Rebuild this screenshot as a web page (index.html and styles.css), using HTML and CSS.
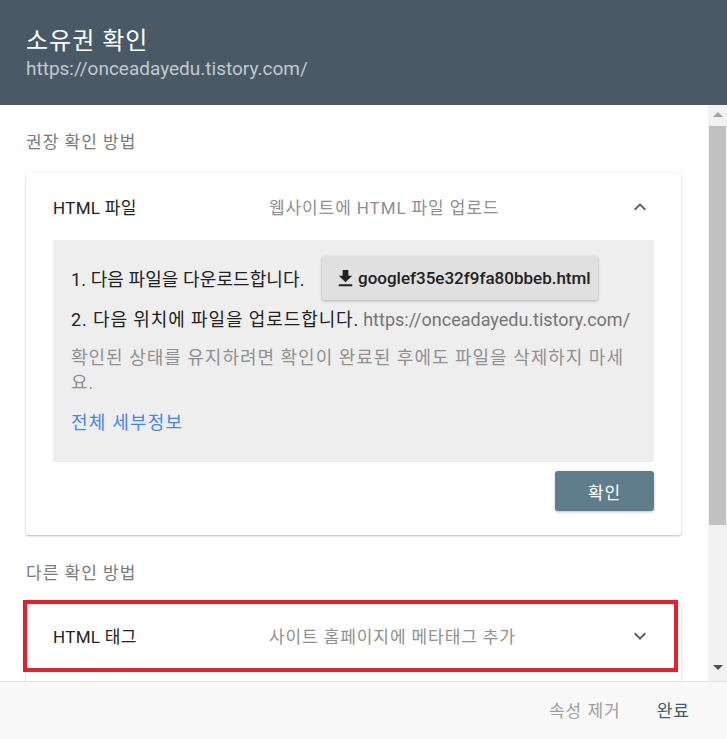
FILE: index.html
```html
<!DOCTYPE html>
<html lang="ko">
<head>
<meta charset="utf-8">
<title>소유권 확인</title>
<link rel="stylesheet" href="styles.css">
</head>
<body>
<div class="dialog">
  <header class="head">
    <h1 class="title">소유권 확인</h1>
    <div class="site">https://onceadayedu.tistory.com/</div>
  </header>
  <div class="body">
    <div class="scroll">
      <div class="label">권장 확인 방법</div>
      <div class="card">
        <div class="card-head">
          <span class="name">HTML 파일</span>
          <span class="desc">웹사이트에 HTML 파일 업로드</span>
          <svg class="chev" viewBox="0 0 24 24" width="24" height="24"><path d="M7.41 15.41L12 10.83l4.59 4.58L18 14l-6-6-6 6z"/></svg>
        </div>
        <div class="panel">
          <div class="step1">
            <span class="step-text">1. 다음 파일을 다운로드합니다.</span>
            <button class="dl"><svg viewBox="0 0 24 24" width="24" height="24"><path d="M19 9h-4V3H9v6H5l7 7 7-7zM5 18v2h14v-2H5z"/></svg><span>googlef35e32f9fa80bbeb.html</span></button>
          </div>
          <div class="step2"><span class="step-text">2. 다음 위치에 파일을 업로드합니다.</span> <span class="u">https://onceadayedu.tistory.com/</span></div>
          <p class="note">확인된 상태를 유지하려면 확인이 완료된 후에도 파일을 삭제하지 마세요.</p>
          <a class="more" href="#">전체 세부정보</a>
        </div>
        <div class="actions"><button class="confirm">확인</button></div>
      </div>
      <div class="label label2">다른 확인 방법</div>
      <div class="card card2">
        <div class="card-head">
          <span class="name">HTML 태그</span>
          <span class="desc">사이트 홈페이지에 메타태그 추가</span>
          <svg class="chev" viewBox="0 0 24 24" width="24" height="24"><path d="M16.59 8.59L12 13.17 7.41 8.59 6 10l6 6 6-6z"/></svg>
        </div>
        <div class="highlight"></div>
      </div>
    </div>
    <div class="scrollbar">
      <div class="arrow up"></div>
      <div class="track"><div class="thumb"></div></div>
      <div class="arrow down"></div>
    </div>
  </div>
  <footer class="foot">
    <span class="btn-remove">속성 제거</span>
    <span class="btn-done">완료</span>
  </footer>
</div>
</body>
</html>
```

FILE: styles.css
```css
* { box-sizing: border-box; }
html, body { margin: 0; padding: 0; }
body {
  font-family: Roboto, "Noto Sans CJK KR", sans-serif;
  background: #fff;
  color: #212121;
}
.dialog {
  width: 727px;
  height: 739px;
  display: flex;
  flex-direction: column;
  overflow: hidden;
}
.head {
  height: 105px;
  flex: none;
  background: #495a66;
  padding: 25px 26px 0;
}
.title {
  margin: 0;
  font-size: 24px;
  letter-spacing: 1px;
  font-weight: 400;
  line-height: 32px;
  color: #fff;
}
.site {
  margin-top: 1px;
  font-size: 19px;
  line-height: 22px;
  color: #c3c9ce;
}
.body {
  height: 576px;
  flex: none;
  display: flex;
  overflow: hidden;
}
.scroll {
  flex: 1;
  padding-top: 27px;
  overflow: hidden;
}
.label {
  padding: 0 26px;
  font-size: 17px;
  letter-spacing: 1px;
  line-height: 20px;
  color: #7a7a7a;
  margin-bottom: 21px;
}
.label2 { margin-top: 28px; margin-bottom: 19px; }
.card {
  position: relative;
  margin: 0 27px 0 26px;
  background: #fff;
  border-radius: 2px;
  box-shadow: 0 1px 3px rgba(0,0,0,0.22), 0 1px 1px rgba(0,0,0,0.08);
}
.card-head {
  height: 67px;
  display: flex;
  align-items: center;
  padding: 0 29px 0 27px;
}
.name {
  width: 216px;
  font-size: 17px;
  letter-spacing: 0.3px;
  color: #212121;
}
.desc {
  flex: 1;
  font-size: 17px;
  letter-spacing: 0.9px;
  color: #8f8f8f;
}
.chev { fill: #616161; }
.panel {
  margin: 0 27px;
  background: #eeeeee;
  padding: 16px 18px 27px;
}
.step-text {
  font-size: 18px;
  letter-spacing: 0.1px;
  color: #212121;
}
.step1 {
  display: flex;
  align-items: center;
  height: 44px;
}
.step1 .step-text { width: 251px; flex: none; }
.step2 .step-text { letter-spacing: 0.9px; }
.dl {
  height: 44px;
  width: 276px;
  display: flex;
  align-items: center;
  gap: 1px;
  padding: 0 8px 0 12px;
  border: none;
  border-radius: 3px;
  background: #e0e0e0;
  box-shadow: 0 1px 3px rgba(0,0,0,0.28);
  font-family: Roboto, "Noto Sans CJK KR", sans-serif;
  font-size: 17px;
  font-weight: 500;
  color: #212121;
}
.dl svg { width: 23px; height: 23px; fill: #212121; flex: none; }
.step2 {
  margin-top: 8px;
  line-height: 24px;
  white-space: nowrap;
}
.step2 .u { font-size: 18px; color: #757575; }
.note {
  margin: 12px 0 0;
  font-size: 18px;
  letter-spacing: 1px;
  line-height: 25px;
  color: #909090;
}
.more {
  display: block;
  margin-top: 16px;
  font-size: 18px;
  letter-spacing: 1.2px;
  line-height: 24px;
  color: #4285f4;
  text-decoration: none;
}
.actions {
  display: flex;
  justify-content: flex-end;
  padding: 9px 27px 24px;
}
.confirm {
  width: 99px;
  height: 40px;
  border: none;
  border-radius: 3px;
  background: #607d8b;
  box-shadow: 0 1px 3px rgba(0,0,0,0.25);
  color: #fff;
  font-family: Roboto, "Noto Sans CJK KR", sans-serif;
  font-size: 17px;
  letter-spacing: 0.8px;
}
.card2 { height: 120px; }
.highlight {
  position: absolute;
  left: -3px;
  top: -2px;
  width: 655px;
  height: 72px;
  border: 4px solid #e5202a;
}
.scrollbar {
  width: 19px;
  flex: none;
  background: #f1f1f1;
  display: flex;
  flex-direction: column;
}
.arrow { height: 19px; flex: none; position: relative; }
.arrow::after {
  content: "";
  position: absolute;
  left: 5px;
  border-left: 5px solid transparent;
  border-right: 5px solid transparent;
}
.arrow.up::after { top: 7px; border-bottom: 5px solid #a3a3a3; }
.arrow.down::after { bottom: 11px; border-top: 5px solid #505050; }
.track { flex: 1; padding: 2px 1px 0 1px; }
.thumb { height: 399px; background: #c1c1c1; }
.foot {
  flex: 1;
  border-top: 1px solid #e3e3e3;
  background: #f8f8f8;
  display: flex;
  align-items: center;
  justify-content: flex-end;
  gap: 36px;
  padding: 0 37px 2px 0;
  font-size: 17px;
  letter-spacing: 1px;
}
.btn-remove { color: #9e9e9e; }
.btn-done { color: #455a64; }
```
